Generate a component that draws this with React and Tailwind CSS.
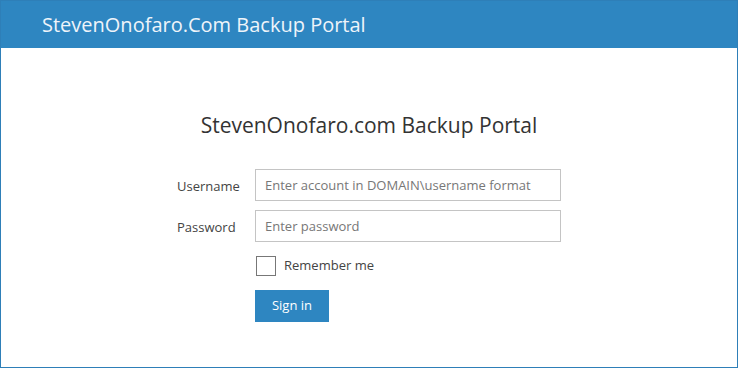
import React from "react";

const App = () => {
  return (
    <div className="w-[738px] h-[368px] border border-[#2e7fb8] bg-white flex flex-col font-['Open_Sans',sans-serif]">
      <header className="h-[47px] shrink-0 bg-[#2e86c1] flex items-center pl-[41px]">
        <h1 className="text-[20px] text-[#eef4fa] leading-none">StevenOnofaro.Com Backup Portal</h1>
      </header>

      <main className="flex flex-col items-center pt-[67px]">
        <h2 className="text-[21px] text-[#333] leading-none mb-[33px]">StevenOnofaro.com Backup Portal</h2>

        <form className="flex flex-col gap-[9px]" onSubmit={(e) => e.preventDefault()}>
          <div className="flex items-center">
            <label className="w-[78px] pt-[4px] text-[13px] text-[#444]">Username</label>
            <input
              className="w-[306px] h-[32px] border border-[#c4c4c4] px-[9px] text-[13px] text-[#555] placeholder:text-[#777] outline-none"
              placeholder="Enter account in DOMAIN\username format"
            />
          </div>
          <div className="flex items-center">
            <label className="w-[78px] pt-[4px] text-[13px] text-[#444]">Password</label>
            <input
              type="password"
              className="w-[306px] h-[32px] border border-[#c4c4c4] px-[9px] text-[13px] text-[#555] placeholder:text-[#777] outline-none"
              placeholder="Enter password"
            />
          </div>
          <div className="flex items-center pl-[78px] mt-[5px]">
            <span className="w-[20px] h-[20px] border border-[#777] bg-white ml-[1px]" />
            <span className="ml-[8px] text-[13px] text-[#444]">Remember me</span>
          </div>
          <div className="pl-[78px] mt-[5px]">
            <button className="w-[74px] h-[32px] bg-[#2e86c1] text-white text-[13px]">Sign in</button>
          </div>
        </form>
      </main>
    </div>
  );
};

export default App;
